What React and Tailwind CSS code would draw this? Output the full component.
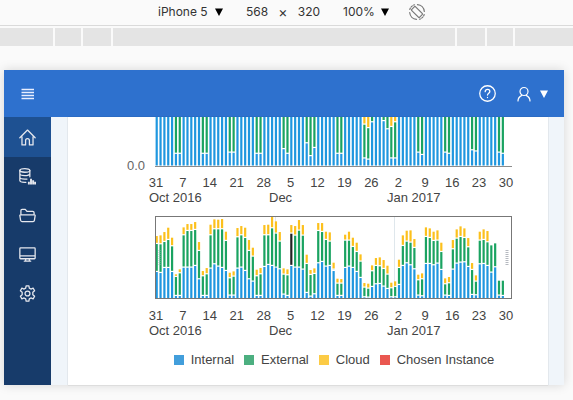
const COLORS = {
  internal: "#1f97df",
  external: "#1aa361",
  cloud: "#fcc01c",
};

// [internal, external, cloud] stack tops per day, starting 31 Oct 2016
const DAYS = [
  [83, 167, 191], [80, 166, 193], [95, 173, 203], [95, 179, 216], [83, 160, 186], [11, 68, 76], [11, 79, 91],
  [96, 193, 217], [96, 206, 227], [96, 206, 227], [101, 209, 233], [61, 146, 173], [11, 70, 86], [11, 76, 95],
  [93, 193, 225], [106, 211, 241], [99, 211, 240], [95, 211, 242], [86, 176, 204], [12, 64, 81], [12, 69, 85],
  [93, 187, 215], [96, 193, 221], [86, 185, 216], [61, 146, 179], [54, 129, 156], [11, 70, 90], [11, 76, 95],
  [98, 193, 224], [104, 193, 225], [101, 214, 248], [96, 198, 235], [91, 174, 203], [15, 75, 94], [11, 73, 91],
  [101, 198, 224], [96, 192, 221], [96, 207, 239], [90, 192, 224], [20, 107, 135], [9, 74, 89], [16, 77, 94],
  [109, 206, 230], [113, 203, 230], [99, 179, 204], [101, 174, 202], [86, 90, 111], [11, 48, 63], [11, 48, 62],
  [95, 177, 195], [99, 177, 204], [95, 158, 186], [83, 143, 171], [65, 114, 136], [7, 36, 50], [6, 33, 48],
  [38, 85, 103], [46, 101, 125], [47, 100, 127], [39, 92, 119], [32, 75, 102], [7, 34, 51], [7, 38, 55],
  [44, 95, 120], [101, 161, 193], [109, 174, 207], [103, 171, 208], [91, 155, 182], [12, 58, 75], [10, 61, 79],
  [107, 188, 217], [107, 185, 214], [103, 176, 204], [108, 177, 208], [89, 143, 171], [12, 46, 64], [11, 49, 68],
  [90, 151, 179], [108, 183, 211], [111, 188, 220], [112, 185, 214], [98, 157, 185], [14, 89, 110], [13, 54, 73],
  [106, 177, 204], [107, 179, 211], [101, 172, 206], [81, 163, 163], [97, 169, 169], [12, 57, 57], [11, 57, 57],
];

const WEEKS = ["31", "7", "14", "21", "28", "5", "12", "19", "26", "2", "9", "16", "23", "30"];
const MONTHS = [
  { label: "Oct 2016", x: 81 },
  { label: "Dec", x: 201 },
  { label: "Jan 2017", x: 319 },
];

const LEFT = 88;
const STEP = 350 / 91;
const HIGHLIGHTED = 35;

function Bars({ base, scale }) {
  return DAYS.map(([a, b, c], i) => {
    const x = LEFT - 0.4 + i * STEP;
    const seg = (from, to, fill) => {
      const height = (to - from) * scale - 1.2;
      if (height <= 0) return null;
      return <rect x={x} y={base - to * scale + 0.7} width="2.2" height={height} fill={fill} />;
    };
    const dark = i === HIGHLIGHTED && scale < 1;
    return (
      <g key={i}>
        {seg(0, a, COLORS.internal)}
        {seg(a, b, dark ? "#222222" : COLORS.external)}
        {seg(b, c, COLORS.cloud)}
      </g>
    );
  });
}

function AxisLabels({ y }) {
  return (
    <g fill="#444444" fontSize="13">
      {WEEKS.map((d, k) => (
        <text key={k} x={LEFT + k * STEP * 7} y={y} textAnchor="middle">{d}</text>
      ))}
      {MONTHS.map((m) => (
        <text key={m.label} x={m.x} y={y + 15}>{m.label}</text>
      ))}
    </g>
  );
}

function DetailChart() {
  return (
    <svg viewBox="0 0 480 92" className="block w-full" role="img" aria-label="Daily usage">
      <Bars base={49} scale={3.5 / 3} />
      <path d="M87 49.5H444" stroke="#8c8c8c" />
      <text x="59" y="53" fontSize="13" fill="#666666">0.0</text>
      <AxisLabels y={70} />
    </svg>
  );
}

function OverviewChart() {
  return (
    <svg viewBox="0 0 480 134" className="block w-full" role="img" aria-label="Usage overview">
      <path d="M207.5 8V90M326.5 8V90" stroke="#dfe7ec" />
      <Bars base={90} scale={1 / 3} />
      <rect x="87.5" y="7.5" width="356" height="82" fill="none" stroke="#777777" />
      <path d="M91.5 41V56" stroke="#9fb5b5" strokeWidth="3" strokeDasharray="1 1" opacity="0.4" />
      <path d="M439 41V56" stroke="#b5b9c0" strokeWidth="3" strokeDasharray="1 1" />
      <AxisLabels y={111} />
    </svg>
  );
}

function Legend() {
  const items = [
    ["Internal", "bg-[#429edb]"],
    ["External", "bg-[#4caf80]"],
    ["Cloud", "bg-[#fccb45]"],
    ["Chosen Instance", "bg-[#ea5750]"],
  ];
  return (
    <ul className="flex justify-center gap-2.5 pt-[7px] pr-1 pl-14 text-[13px] leading-5 text-[#444444]">
      {items.map(([label, color]) => (
        <li key={label} className="flex items-center gap-[7px]">
          <span className={`size-2.5 ${color}`} />
          {label}
        </li>
      ))}
    </ul>
  );
}

function Icon({ children, className = "size-4" }) {
  return (
    <svg viewBox="0 0 16 16" className={className} fill="none" stroke="currentColor" strokeWidth="1.2" strokeLinejoin="round" strokeLinecap="round" aria-hidden="true">
      {children}
    </svg>
  );
}

const NAV = [
  {
    label: "Home",
    icon: <path d="M.8 8.2 8 1l7.2 7.2M2.8 7v8h3.4v-4.2a1.8 1.8 0 0 1 3.6 0V15h3.4V7" />,
  },
  {
    label: "Data",
    icon: (
      <>
        <ellipse cx="5.5" cy="2.3" rx="4.7" ry="1.7" />
        <path d="M.8 2.3v9.5c0 1 2 1.7 4.7 1.7h1M10.2 2.3v6M.8 5.5c0 1 2 1.7 4.7 1.7s4.7-.8 4.7-1.7M.8 8.7c0 1 2 1.7 4.7 1.7h2" />
        <path d="M9.3 15.5v-2.6M11.3 15.5V10M13.3 15.5v-4M15.2 15.5v-2.6" strokeWidth="1.8" strokeLinecap="butt" />
      </>
    ),
  },
  {
    label: "Files",
    icon: <path d="M1.8 7.5V3.3c0-.7.4-1.1 1.1-1.1h3l1.6 1.9h5.4c.8 0 1.3.5 1.3 1.2v2.2M1.3 7.5h13.4c.4 0 .6.2.5.6l-.7 4.4c-.1.7-.6 1.2-1.3 1.2H2.8c-.7 0-1.2-.5-1.3-1.2L.8 8.1c0-.4.1-.6.5-.6Z" />,
  },
  {
    label: "Monitor",
    icon: <path d="M1.5 1.8h13c.4 0 .7.3.7.7v8.8c0 .4-.3.7-.7.7h-13c-.4 0-.7-.3-.7-.7V2.5c0-.4.3-.7.7-.7ZM.8 9.2h14.4M6.3 12v1.5M9.7 12v1.5M5 14.3h6" />,
  },
  {
    label: "Settings",
    icon: (
      <>
        <path d="M6.7.8h2.6l.4 2.1 1.5.9 2.1-.8 1.4 2.4-1.7 1.4v2.4l1.7 1.4-1.4 2.4-2.1-.8-1.5.9-.4 2.1H6.7l-.4-2.1-1.5-.9-2.1.8-1.4-2.4L3 9.2V6.8L1.3 5.4 2.7 3l2.1.8 1.5-.9Z" />
        <circle cx="8" cy="8" r="2.3" />
      </>
    ),
  },
];

function Triangle({ className }) {
  return (
    <svg viewBox="0 0 8 8" className={className} fill="currentColor" aria-hidden="true">
      <path d="M0 .5h8L4 8Z" />
    </svg>
  );
}

function DeviceToolbar() {
  return (
    <div className="flex h-[26px] items-center justify-center border-b border-[#dadada] pb-0.5 pl-2.5 font-[Inter,sans-serif] text-xs text-[#333333]">
      <label className="flex items-center gap-1.5">
        <select aria-label="Device" className="w-[51px] appearance-none">
          <option>iPhone 5</option>
        </select>
        <Triangle className="size-2 text-black" />
      </label>
      <input aria-label="Width" defaultValue="568" className="ml-4 w-9 text-center" />
      <span className="w-4 text-center text-sm">×</span>
      <input aria-label="Height" defaultValue="320" className="w-9 text-center" />
      <label className="ml-4 flex items-center gap-1.5">
        <select aria-label="Zoom" className="w-8 appearance-none">
          <option>100%</option>
        </select>
        <Triangle className="size-2 text-black" />
      </label>
      <button aria-label="Rotate" className="ml-5 text-[#777777]">
        <Icon>
          <path d="m2.800 5.300 2.500-2.500c.4-.4.9-.4 1.300 0l6.600 6.600c.4.4.4.9 0 1.300l-2.500 2.500c-.4.4-.9.4-1.300 0L2.800 6.600c-.4-.4-.4-.9 0-1.300Z" />
          <path d="M8.500.7c3.600.2 6.500 3 6.800 6.800M7.500 15.300C3.900 15.100 1 12.300.7 8.500" />
          <path d="M.8 5.500C1.500 3.200 3.200 1.500 5.500.8M15.200 10.500c-.7 2.300-2.400 4-4.700 4.700" strokeDasharray="1.500 1.500" />
        </Icon>
      </button>
    </div>
  );
}

function MediaStrip() {
  return (
    <div className="mt-0.5 flex h-[18px] gap-0.5 *:bg-[#e4e4e4]">
      <span className="w-[53px]" />
      <span className="w-[26px]" />
      <span className="w-7" />
      <span className="flex-1" />
      <span className="w-7" />
      <span className="w-[26px]" />
      <span className="w-[58px]" />
    </div>
  );
}

export default function App() {
  return (
    <div className="min-h-screen bg-[#fafafa] font-['Liberation_Sans',sans-serif]">
      <DeviceToolbar />
      <MediaStrip />

      <div className="mt-6 mr-[9px] ml-1 bg-[#f0f5fa] shadow-[0_0_10px_rgba(0,0,0,0.15)]">
        <header className="flex h-[47px] items-center bg-[#2e71ce] px-4 text-white">
          <button aria-label="Menu">
            <svg viewBox="0 0 16 16" className="size-4" stroke="#e8eeff" strokeWidth="1.4" aria-hidden="true">
              <path d="M1.500 3.500h12.500M1.500 6.500h12.500M1.500 9.500h12.500M1.500 12.500h12.500" />
            </svg>
          </button>
          <button aria-label="Help" className="ml-auto">
            <Icon className="size-[17px]">
              <circle cx="8" cy="8" r="7.300" />
              <path d="M5.800 6.300c0-1.300 1-2.200 2.200-2.200s2.200.8 2.200 2c0 1.600-2.200 1.700-2.200 3.400M8 11.600v.2" />
            </Icon>
          </button>
          <button aria-label="Account" className="ml-5 flex items-center gap-2">
            <Icon>
              <circle cx="8" cy="5.500" r="4" />
              <path d="M2 15c0-2.600 1.400-4.400 3.800-5.600M14 15c0-2.600-1.400-4.400-3.800-5.600" />
            </Icon>
            <Triangle className="size-2" />
          </button>
        </header>

        <div className="flex">
          <nav className="w-[47px] shrink-0 bg-[#173b6a] text-[#e6e8ee]">
            {NAV.map((item, i) => (
              <a
                key={item.label}
                href="#"
                aria-label={item.label}
                className={`flex items-center justify-center ${i === 0 ? "h-10 bg-[#1e5192]" : "h-[39px]"}`}
              >
                <Icon className="size-[17px]">{item.icon}</Icon>
              </a>
            ))}
          </nav>
          <main className="mr-4 ml-[17px] min-w-0 flex-1 bg-white pb-[15px] shadow-[0_0_1px_rgba(0,0,0,0.3)]">
            <DetailChart />
            <OverviewChart />
            <Legend />
          </main>
        </div>
      </div>
    </div>
  );
}
